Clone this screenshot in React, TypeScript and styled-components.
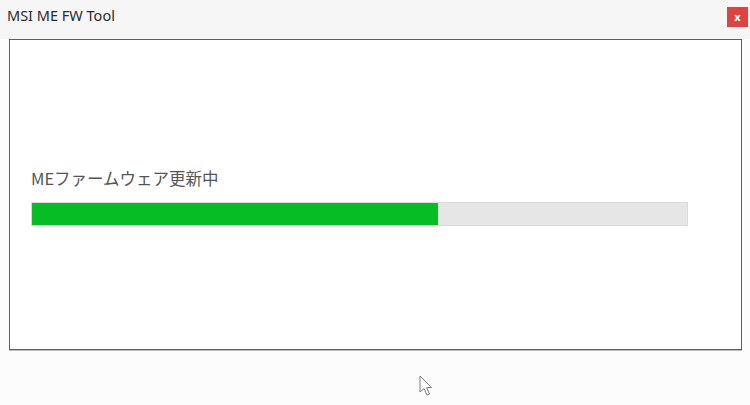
import React from "react";
import styled, { createGlobalStyle } from "styled-components";

const Global = createGlobalStyle`
  html, body { margin: 0; padding: 0; background: #fcfcfc; }
  * { box-sizing: border-box; }
`;

const Window = styled.div`
  position: relative;
  width: 750px;
  height: 405px;
  background: #fcfcfc;
  display: flex;
  flex-direction: column;
  font-family: "Noto Sans", "Noto Sans CJK JP", sans-serif;
  overflow: hidden;
`;

const TitleBar = styled.div`
  height: 39px;
  display: flex;
  align-items: flex-start;
  justify-content: space-between;
  padding: 5px 2px 0 7px;
  background: #f6f6f6;
`;

const Title = styled.span`
  font-size: 14.5px;
  color: #2b2b2b;
  line-height: 20px;
`;

const CloseButton = styled.div`
  width: 21px;
  height: 20px;
  margin-top: 2px;
  background: #dc4343;
  color: #fff;
  font-size: 11px;
  font-weight: 700;
  display: flex;
  align-items: center;
  justify-content: center;
  line-height: 1;
  padding-bottom: 2px;
`;

const Panel = styled.div`
  margin-left: 9px;
  width: 733px;
  height: 311px;
  background: #ffffff;
  border: 1px solid #5e5e5e;
  box-shadow: 0 1px 0 #bdbdbd;
  padding: 127px 0 0 21px;
  display: flex;
  flex-direction: column;
  gap: 13px;
`;

const Label = styled.div`
  font-family: "Noto Sans CJK JP", "Noto Sans", sans-serif;
  font-size: 16.5px;
  line-height: 22px;
  color: #555555;
`;

const Track = styled.div`
  width: 657px;
  height: 24px;
  background: #e6e6e6;
  border: 1px solid #dadada;
  display: flex;
`;

const Fill = styled.div`
  height: 100%;
  background: #06bd25;
`;

const Footer = styled.div`
  flex: 1;
  position: relative;
`;

const Cursor = styled.svg`
  position: absolute;
  left: 419px;
  top: 25px;
`;

export default function App() {
  const progress = 406 / 655;
  return (
    <>
      <Global />
      <Window>
        <TitleBar>
          <Title>MSI ME FW Tool</Title>
          <CloseButton>x</CloseButton>
        </TitleBar>
        <Panel>
          <Label>MEファームウェア更新中</Label>
          <Track>
            <Fill style={{ width: `${progress * 100}%` }} />
          </Track>
        </Panel>
        <Footer>
          <Cursor width="14" height="22" viewBox="0 0 14 22">
            <path
              d="M1 1 L1 17 L5 13.5 L8 20 L10.5 19 L7.6 12.6 L12.5 12.6 Z"
              fill="#ffffff"
              stroke="#7a7a7a"
              strokeWidth="1"
              strokeLinejoin="round"
            />
          </Cursor>
        </Footer>
      </Window>
    </>
  );
}
